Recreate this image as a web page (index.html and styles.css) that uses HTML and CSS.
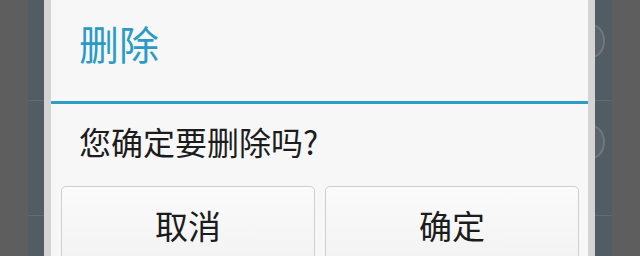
FILE: index.html
```html
<!DOCTYPE html>
<html lang="zh">
<head>
    <meta charset="UTF-8">
    <title>删除</title>
    <link rel="stylesheet" href="styles.css">
</head>
<body>
    <div class="screen">
        <div class="side side-left">
            <div class="row"></div>
            <div class="row"></div>
        </div>
        <div class="dialog">
            <div class="dialog-title">删除</div>
            <div class="dialog-message">您确定要删除吗?</div>
            <div class="dialog-buttons">
                <button class="btn">取消</button>
                <button class="btn">确定</button>
            </div>
        </div>
        <div class="side side-right">
            <div class="row"><span class="knob"></span></div>
            <div class="row"><span class="knob"></span></div>
        </div>
    </div>
</body>
</html>
```

FILE: styles.css
```css
body {
    margin: 0;
    background-color: #5e5e5e;
    font-family: "Noto Sans CJK SC", "Noto Sans", sans-serif;
}
.screen {
    display: flex;
    height: 256px;
    overflow: hidden;
}
.side {
    width: 16px;
    background-color: #525c63;
    display: flex;
    flex-direction: column;
    overflow: hidden;
}
.side-left {
    margin-left: 28px;
}
.side-right {
    width: 17px;
}
.side .row {
    height: 100px;
    border-bottom: 1px solid #636c72;
    position: relative;
    flex-shrink: 0;
}
.side .row + .row {
    height: 114px;
}
.knob {
    position: absolute;
    left: -16px;
    top: 24px;
    width: 22px;
    height: 30px;
    border-radius: 50%;
    border: 2px solid #70767a;
    background-color: #5a6369;
}
.dialog {
    width: 537px;
    background-color: #f7f7f7;
    border-left: 7px solid #d4d4d4;
    border-right: 7px solid #d4d4d4;
}
.dialog-title {
    height: 104px;
    box-sizing: border-box;
    padding: 16px 0 0 28px;
    font-size: 40px;
    line-height: 54px;
    color: #2a9bc6;
    border-bottom: 3px solid #2d9dc7;
}
.dialog-message {
    padding: 15px 0 0 28px;
    height: 67px;
    font-size: 32px;
    line-height: 44px;
    color: #1c1c1c;
}
.dialog-buttons {
    display: flex;
    gap: 10px;
    padding: 0 9px 0 10px;
}
.btn {
    flex: 1;
    height: 90px;
    border: 1px solid #cfcfcf;
    border-radius: 5px;
    background: linear-gradient(#fbfbfb, #f1f1f1);
    font-family: inherit;
    font-size: 33px;
    line-height: 44px;
    color: #1c1c1c;
    text-align: center;
    display: flex;
    justify-content: center;
    align-items: flex-start;
    padding: 16px 0 0;
}
```
